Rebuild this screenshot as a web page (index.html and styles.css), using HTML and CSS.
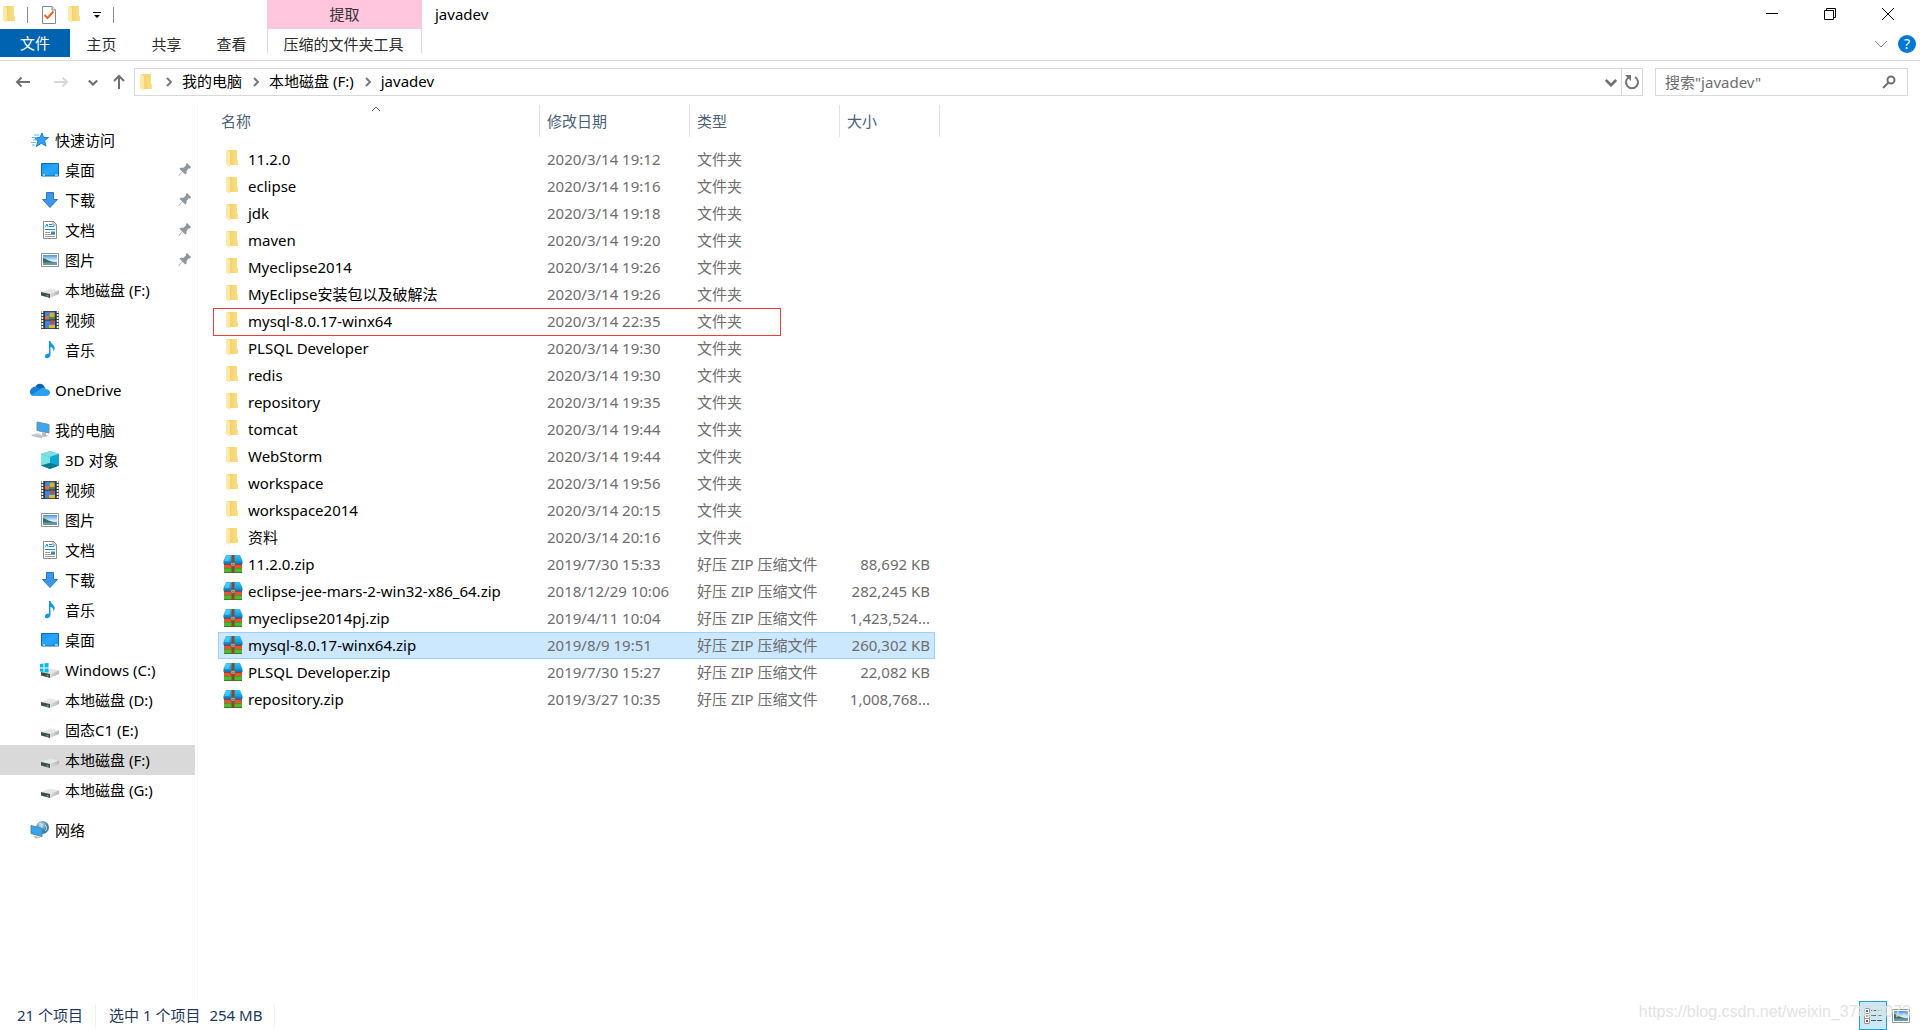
FILE: index.html
```html
<!DOCTYPE html>
<html lang="zh-CN">
<head>
<meta charset="utf-8">
<title>javadev</title>
<link rel="stylesheet" href="styles.css">
</head>
<body>
<svg class="sprite" aria-hidden="true">
  <defs>
    <linearGradient id="gold" x1="0" x2="1"><stop offset="0" stop-color="#f3cf6b"/><stop offset="1" stop-color="#fbdf83"/></linearGradient>
    <linearGradient id="sky" x1="0" y1="0" x2="0" y2="1"><stop offset="0" stop-color="#4b93dd"/><stop offset=".55" stop-color="#d9f0f8"/><stop offset="1" stop-color="#8fc0e0"/></linearGradient>
    <linearGradient id="drv" x1="0" x2="1"><stop offset="0" stop-color="#dcdcde"/><stop offset="1" stop-color="#b4b6b9"/></linearGradient>
    <linearGradient id="blue" x1="0" y1="0" x2="1" y2="1"><stop offset="0" stop-color="#1391f0"/><stop offset=".5" stop-color="#2ba6fb"/><stop offset="1" stop-color="#1395f5"/></linearGradient>
    <linearGradient id="lid" x1="0" y1="0" x2="0" y2="1"><stop offset="0" stop-color="#37c0f5"/><stop offset=".6" stop-color="#14a4e4"/><stop offset="1" stop-color="#0b6fae"/></linearGradient>
    <radialGradient id="globe" cx=".4" cy=".3"><stop offset="0" stop-color="#c4e2ee"/><stop offset="1" stop-color="#3b7f9e"/></radialGradient>
  </defs>
  <symbol id="folder" viewBox="0 0 12 17"><path d="M2 0H11V9.500L12 10.500V15H4Z" fill="url(#gold)"/><path d="M0 0H2L4 2V17L0 14.500Z" fill="#ffe9a6"/></symbol>
  <symbol id="star" viewBox="0 0 20 18"><path d="M12 2L13.500 6.500H18.500L14.500 9.800L16 15L11.300 12.300L6.300 15.500L8 10.200L4.800 7L9.800 6.500Z" fill="#2ea3f2" stroke="#1a7cc8"/><path d="M4 4H9M2 6.500H6M3 9H7M1 11.500H6M2 14H5" stroke="#66b9ee"/></symbol>
  <symbol id="desktop" viewBox="0 0 20 18"><path d="M1.500 2.500H18.500V15H1.500Z" fill="url(#blue)" stroke="#0a70b8"/><path d="M3 14H5M15 14H18" stroke="#fff"/></symbol>
  <symbol id="down" viewBox="0 0 20 18"><path d="M6.500 1.500H13.500V8.500H17.500L10 16.500L2.500 8.500H6.500Z" fill="#3b97e8" stroke="#2b78c4"/></symbol>
  <symbol id="doc" viewBox="0 0 20 18"><path d="M3.500.5H13.500L16.500 3.500V17.500H3.500Z" fill="#fff" stroke="#8b8b8b"/><path d="M13 .5V4H16.500" fill="none" stroke="#8b8b8b"/><path d="M5 6L7 3L8 6M9 3.500H12M9 5.500H14M5 8.500H15" stroke="#1b87d8" fill="none"/><path d="M5 11.500H10M5 13.500H15M5 15.500H15" stroke="#9a9a9a"/><path d="M11 10.500H15V13H11Z" fill="#3f83b5"/></symbol>
  <symbol id="pic" viewBox="0 0 20 18"><path d="M1.500 2.500H18.500V15.500H1.500Z" fill="#fff" stroke="#8f959b"/><path d="M3 4H17V14H3Z" fill="url(#sky)"/><path d="M3 7C7 8 9 11 17 11.500V12H3Z" fill="#3f6b58"/><path d="M3 11.500H17V14H3Z" fill="#6898b0"/></symbol>
  <symbol id="drive" viewBox="0 0 20 18"><path d="M1 11L10 7.500L19 9.500L10 13Z" fill="#e6e6e8"/><path d="M10 13L19 9.500V13L10 17Z" fill="url(#drv)"/><path d="M1 11L10 13V17L1 14.500Z" fill="#45494b"/><path d="M6.500 14H8.500V15.500H6.500Z" fill="#35c84a"/></symbol>
  <symbol id="windrive" viewBox="0 0 20 18"><use href="#drive" width="20" height="18"/><path d="M0 3L3.500 2.500V6.500H0ZM4.500 2.300L8.500 2V6.500H4.500ZM0 7.500H3.500V11L0 10.600ZM4.500 7.500H8.500V11.600L4.500 11.200Z" fill="#10b5ee"/></symbol>
  <symbol id="film" viewBox="0 0 20 18"><path d="M1 0H19V18H1Z" fill="#4c4c4c"/><path d="M2.500 0V18M17.500 0V18" stroke="#fff" stroke-width="2" stroke-dasharray="2 1"/><path d="M5 1H15V17H5Z" fill="#4084dc"/><path d="M4 0V18M16 0V18M4 9H16" stroke="#222"/><path d="M5 5H9V8.500H5Z" fill="#dc6e48"/><circle cx="12" cy="4" r="2.500" fill="#dcb21d"/><path d="M9 6H15V8H9Z" fill="#4a8f36"/><circle cx="12" cy="11" r="2" fill="#c04a38"/><path d="M9 14H15V17H9Z" fill="#e7b728"/></symbol>
  <symbol id="music" viewBox="0 0 20 18"><path d="M9 0H10.500C11 3 14.500 4 14.700 7C14.800 8.500 14 9.800 13 10.500C14 8 12.500 6.500 10.500 6V14C10.500 16 8.500 17.500 6.500 17.300C4.500 17 4.300 14.500 6 13.200C7 12.400 8 12.300 9 12.500Z" fill="#1198ee"/></symbol>
  <symbol id="cloud" viewBox="0 0 20 18"><path d="M5 7C6 2 13 1 15 7L10 10Z" fill="#0a63b5"/><path d="M0 11C0 7 4 5 7 6L14 12L2 14.500C1 14 0 13 0 11Z" fill="#1581d6"/><path d="M9 9C12 5.500 15.500 6.500 16.200 8.300C19 8.300 20 10 20 11.500C20 14 18 15 16 15H4C3 15 2 14.500 1.500 14Z" fill="#2aa1ec"/></symbol>
  <symbol id="pc" viewBox="0 0 20 18"><path d="M7 1L19 3.500V12L7 9.500Z" fill="#3aa7ef" stroke="#6d8da4"/><path d="M12 11L16 12V14L19 15L14 16L10 14.500L12 14Z" fill="#b4bbc2"/><path d="M0 14L9 12L14 15.500L11 17.500Z" fill="#d6dadf"/><path d="M2 14.500L12 16.500M5 13.500L13 15.500" stroke="#b1b7bc"/></symbol>
  <symbol id="cube" viewBox="0 0 20 18"><path d="M10 0L19 3V14.500L10 18L1 14.500V3Z" fill="#22b5ca"/><path d="M10 0L19 3L10 6L1 3Z" fill="#7fdee3"/><path d="M1 3L10 6V12L1 14.500Z" fill="#79e3e5"/><path d="M10 6L19 3V14.500L10 12Z" fill="#10a7d5"/><path d="M1 14.500L10 12L19 14.500L10 18Z" fill="#087b8d"/></symbol>
  <symbol id="net" viewBox="0 0 20 18"><circle cx="12.500" cy="6.500" r="6.500" fill="url(#globe)"/><path d="M9 3C12 1 13 5 11 7M15 4C17 6 17 9 15 10" stroke="#dcedf3" fill="none"/><path d="M1 4.500L12 7.500V15.500L1 12.500Z" fill="#36a5f0" stroke="#4d86ad"/><path d="M5 15L9 15.500L11 17L6 17.500L3 16Z" fill="#bfc6cb"/></symbol>
  <symbol id="pin" viewBox="0 0 14 14"><path d="M9 0L13 4L12 5.500L10.500 5.500L8.500 8V10.500L7.300 11.500L4.500 8.800L1 13L.5 12.500L4.300 8.500L1.500 5.700L2.800 4.700H5.500L8 2.500V1Z" fill="#8c979f"/></symbol>
  <symbol id="zip" viewBox="0 0 20 18"><path d="M3 0H17L19.500 6V9H.5V6Z" fill="url(#lid)"/><path d="M3 1L1.500 6H6L7 1Z" fill="#82d7f7" opacity=".5"/><path d="M1 9H19V14H1Z" fill="#e4552f"/><path d="M1 13H19V18H1Z" fill="#4dbb2c"/><path d="M1 9H19V10H1ZM1 13H19V13.500H1ZM1 17H19V18H1Z" fill="#26303a" opacity=".45"/><path d="M8.500 0H11.500V18H8.500Z" fill="#87492c"/><path d="M8 7.500H12V11H8Z" fill="#d3c9c2" stroke="#7c5f50"/><path d="M9.500 8.500H10.500V10H9.500Z" fill="#333"/></symbol>
  <symbol id="next" viewBox="0 0 8 10"><path d="M2 1L6 5L2 9" fill="none" stroke="#7a7a7a" stroke-width="2"/></symbol>
  <symbol id="chev" viewBox="0 0 14 10"><path d="M1 2L7 8L13 2" fill="none" stroke="currentColor" stroke-width="3"/></symbol>
  <symbol id="thinchev" viewBox="0 0 14 10"><path d="M1 2L7 8L13 2" fill="none" stroke="currentColor"/></symbol>
</svg>

<header>
  <div class="titlebar">
    <div class="quick">
      <svg class="folder"><use href="#folder"/></svg>
      <span class="bar"></span>
      <button aria-label="属性"><svg width="14" height="18" viewBox="0 0 14 18"><path d="M.5.5H10L13.500 4V17.500H.5Z" fill="#fff" stroke="#888"/><path d="M10 .5V4H13.500" fill="#e4e4e4" stroke="#888"/><path d="M2.500 9L5.500 12L11.500 5.500" stroke="#ef6428" stroke-width="2" fill="none"/></svg></button>
      <button aria-label="新建文件夹"><svg class="folder"><use href="#folder"/></svg></button>
      <button class="more" aria-label="自定义"><svg width="8" height="7" viewBox="0 0 8 7"><path d="M0 0H8V1H0ZM1 3H7L4 6Z"/></svg></button>
      <span class="bar"></span>
    </div>
    <div class="context">提取</div>
    <h1>javadev</h1>
    <div class="winbtns">
      <button aria-label="最小化"><svg width="12" height="12"><path d="M0 5.500H12" stroke="#000"/></svg></button>
      <button aria-label="还原"><svg width="12" height="12"><path d="M.5 2.500H9.500V11.500H.5ZM2.500 2V.5H11.500V9.500H10" stroke="#000" fill="none"/></svg></button>
      <button aria-label="关闭"><svg width="12" height="12"><path d="M0 0L12 12M12 0L0 12" stroke="#000"/></svg></button>
    </div>
  </div>
  <nav class="tabs">
    <button class="file">文件</button>
    <button>主页</button>
    <button>共享</button>
    <button>查看</button>
    <button class="tools">压缩的文件夹工具</button>
    <span class="grow"></span>
    <button class="expand" aria-label="展开功能区"><svg width="14" height="10"><use href="#thinchev"/></svg></button>
    <button class="help" aria-label="帮助">?</button>
  </nav>
</header>

<div class="address">
  <div class="moves">
    <button aria-label="后退"><svg width="16" height="12"><path d="M15 6H2M6.500 1.500L2 6L6.500 10.500" fill="none" stroke="#707070" stroke-width="2"/></svg></button>
    <button aria-label="前进"><svg width="16" height="12"><path d="M1 6H14M9.500 1.500L14 6L9.500 10.500" fill="none" stroke="#d8d8d8" stroke-width="2"/></svg></button>
    <button class="small" aria-label="最近位置"><svg width="10" height="7"><use href="#chev"/></svg></button>
    <button class="small" aria-label="向上"><svg width="12" height="16"><path d="M6 15V2M1 7L6 2L11 7" fill="none" stroke="#707070" stroke-width="2"/></svg></button>
  </div>
  <div class="path">
    <svg class="folder"><use href="#folder"/></svg>
    <svg class="next"><use href="#next"/></svg><a href="#">我的电脑</a>
    <svg class="next"><use href="#next"/></svg><a href="#">本地磁盘 (F:)</a>
    <svg class="next"><use href="#next"/></svg><a href="#">javadev</a>
    <span class="grow"></span>
    <button aria-label="历史"><svg width="12" height="9"><use href="#chev"/></svg></button>
    <button class="refresh" aria-label="刷新"><svg width="16" height="16"><path d="M5 3A6 6 0 1 0 11 3" fill="none" stroke="#747474" stroke-width="2"/><path d="M1 1H7V7Z" fill="#747474"/></svg></button>
  </div>
  <div class="search">
    <input type="search" aria-label="搜索" placeholder='搜索"javadev"'>
    <svg width="14" height="14"><circle cx="9" cy="5" r="3.500" fill="none" stroke="#707070" stroke-width="2"/><path d="M6.500 7.500L1 13" stroke="#707070" stroke-width="2"/></svg>
  </div>
</div>

<div class="body">
  <aside>
    <ul>
      <li class="top"><a href="#"><svg><use href="#star"/></svg>快速访问</a></li>
      <li><a href="#"><svg><use href="#desktop"/></svg>桌面<svg class="pin"><use href="#pin"/></svg></a></li>
      <li><a href="#"><svg><use href="#down"/></svg>下载<svg class="pin"><use href="#pin"/></svg></a></li>
      <li><a href="#"><svg><use href="#doc"/></svg>文档<svg class="pin"><use href="#pin"/></svg></a></li>
      <li><a href="#"><svg><use href="#pic"/></svg>图片<svg class="pin"><use href="#pin"/></svg></a></li>
      <li><a href="#"><svg><use href="#drive"/></svg>本地磁盘 (F:)</a></li>
      <li><a href="#"><svg><use href="#film"/></svg>视频</a></li>
      <li><a href="#"><svg><use href="#music"/></svg>音乐</a></li>
    </ul>
    <ul>
      <li class="top"><a href="#"><svg><use href="#cloud"/></svg>OneDrive</a></li>
    </ul>
    <ul>
      <li class="top"><a href="#"><svg><use href="#pc"/></svg>我的电脑</a></li>
      <li><a href="#"><svg><use href="#cube"/></svg>3D 对象</a></li>
      <li><a href="#"><svg><use href="#film"/></svg>视频</a></li>
      <li><a href="#"><svg><use href="#pic"/></svg>图片</a></li>
      <li><a href="#"><svg><use href="#doc"/></svg>文档</a></li>
      <li><a href="#"><svg><use href="#down"/></svg>下载</a></li>
      <li><a href="#"><svg><use href="#music"/></svg>音乐</a></li>
      <li><a href="#"><svg><use href="#desktop"/></svg>桌面</a></li>
      <li><a href="#"><svg><use href="#windrive"/></svg>Windows (C:)</a></li>
      <li><a href="#"><svg><use href="#drive"/></svg>本地磁盘 (D:)</a></li>
      <li><a href="#"><svg><use href="#drive"/></svg>固态C1 (E:)</a></li>
      <li class="current"><a href="#"><svg><use href="#drive"/></svg>本地磁盘 (F:)</a></li>
      <li><a href="#"><svg><use href="#drive"/></svg>本地磁盘 (G:)</a></li>
    </ul>
    <ul>
      <li class="top"><a href="#"><svg><use href="#net"/></svg>网络</a></li>
    </ul>
  </aside>
  <main>
    <table>
      <colgroup><col class="c-name"><col class="c-date"><col class="c-type"><col class="c-size"><col class="c-end"></colgroup>
      <thead>
        <tr><th>名称<svg class="sort" width="10" height="6"><path d="M1 5L5 1L9 5" fill="none" stroke="#666"/></svg></th><th>修改日期</th><th>类型</th><th colspan="2">大小</th></tr>
      </thead>
      <tbody>
        <tr><td><svg class="folder"><use href="#folder"/></svg>11.2.0</td><td>2020/3/14 19:12</td><td>文件夹</td><td></td></tr>
        <tr><td><svg class="folder"><use href="#folder"/></svg>eclipse</td><td>2020/3/14 19:16</td><td>文件夹</td><td></td></tr>
        <tr><td><svg class="folder"><use href="#folder"/></svg>jdk</td><td>2020/3/14 19:18</td><td>文件夹</td><td></td></tr>
        <tr><td><svg class="folder"><use href="#folder"/></svg>maven</td><td>2020/3/14 19:20</td><td>文件夹</td><td></td></tr>
        <tr><td><svg class="folder"><use href="#folder"/></svg>Myeclipse2014</td><td>2020/3/14 19:26</td><td>文件夹</td><td></td></tr>
        <tr><td><svg class="folder"><use href="#folder"/></svg>MyEclipse安装包以及破解法</td><td>2020/3/14 19:26</td><td>文件夹</td><td></td></tr>
        <tr class="marked"><td><svg class="folder"><use href="#folder"/></svg>mysql-8.0.17-winx64</td><td>2020/3/14 22:35</td><td>文件夹</td><td></td></tr>
        <tr><td><svg class="folder"><use href="#folder"/></svg>PLSQL Developer</td><td>2020/3/14 19:30</td><td>文件夹</td><td></td></tr>
        <tr><td><svg class="folder"><use href="#folder"/></svg>redis</td><td>2020/3/14 19:30</td><td>文件夹</td><td></td></tr>
        <tr><td><svg class="folder"><use href="#folder"/></svg>repository</td><td>2020/3/14 19:35</td><td>文件夹</td><td></td></tr>
        <tr><td><svg class="folder"><use href="#folder"/></svg>tomcat</td><td>2020/3/14 19:44</td><td>文件夹</td><td></td></tr>
        <tr><td><svg class="folder"><use href="#folder"/></svg>WebStorm</td><td>2020/3/14 19:44</td><td>文件夹</td><td></td></tr>
        <tr><td><svg class="folder"><use href="#folder"/></svg>workspace</td><td>2020/3/14 19:56</td><td>文件夹</td><td></td></tr>
        <tr><td><svg class="folder"><use href="#folder"/></svg>workspace2014</td><td>2020/3/14 20:15</td><td>文件夹</td><td></td></tr>
        <tr><td><svg class="folder"><use href="#folder"/></svg>资料</td><td>2020/3/14 20:16</td><td>文件夹</td><td></td></tr>
        <tr><td><svg class="zip"><use href="#zip"/></svg>11.2.0.zip</td><td>2019/7/30 15:33</td><td>好压 ZIP 压缩文件</td><td>88,692 KB</td></tr>
        <tr><td><svg class="zip"><use href="#zip"/></svg>eclipse-jee-mars-2-win32-x86_64.zip</td><td>2018/12/29 10:06</td><td>好压 ZIP 压缩文件</td><td>282,245 KB</td></tr>
        <tr><td><svg class="zip"><use href="#zip"/></svg>myeclipse2014pj.zip</td><td>2019/4/11 10:04</td><td>好压 ZIP 压缩文件</td><td>1,423,524...</td></tr>
        <tr class="selected"><td><svg class="zip"><use href="#zip"/></svg>mysql-8.0.17-winx64.zip</td><td>2019/8/9 19:51</td><td>好压 ZIP 压缩文件</td><td>260,302 KB</td></tr>
        <tr><td><svg class="zip"><use href="#zip"/></svg>PLSQL Developer.zip</td><td>2019/7/30 15:27</td><td>好压 ZIP 压缩文件</td><td>22,082 KB</td></tr>
        <tr><td><svg class="zip"><use href="#zip"/></svg>repository.zip</td><td>2019/3/27 10:35</td><td>好压 ZIP 压缩文件</td><td>1,008,768...</td></tr>
      </tbody>
    </table>
  </main>
</div>

<footer>
  <span class="cell">21 个项目</span>
  <span class="cell"><span>选中 1 个项目</span><span>254 MB</span></span>
  <span class="grow"></span>
  <button class="on" aria-label="详细信息"><svg width="18" height="16"><path d="M.5.5H5.500V5.500H.5ZM.5 5.500H5.500V10.500H.5ZM.5 10.500H5.500V15.500H.5Z" fill="#fff" stroke="#999"/><path d="M2 2H4V4H2Z" fill="#3c7ec4"/><path d="M2 7H4V9H2Z" fill="#b39a35"/><path d="M2 12H4V14H2Z" fill="#c33c22"/><path d="M7 2.500H12M13 2.500H18M7 7.500H12M13 7.500H18M7 12.500H12M13 12.500H18" stroke="#555"/></svg></button>
  <button aria-label="大图标"><svg width="20" height="18"><use href="#pic"/></svg></button>
  <span class="watermark">https://blog.csdn.net/weixin_37825073</span>
</footer>
</body>
</html>
```

FILE: styles.css
```css
* { box-sizing: border-box; }
body {
  margin: 0;
  min-height: 100vh;
  display: flex;
  flex-direction: column;
  background: #fff;
  color: #000;
  font: 15px/20px "Noto Sans", "Noto Sans CJK SC", sans-serif;
}
button, input { font: inherit; color: inherit; }
button {
  display: flex;
  align-items: center;
  justify-content: center;
  padding: 0;
  border: 0;
  background: none;
}
svg { flex: none; }
a { color: inherit; text-decoration: none; }
.sprite { position: absolute; width: 0; height: 0; }
.folder { width: 12px; height: 17px; }
.grow { flex: 1; }

/* title bar */
.titlebar { display: flex; height: 29px; }
.quick {
  display: flex;
  align-items: center;
  gap: 12px;
  width: 267px;
  padding-left: 3px;
}
.quick .bar { width: 1px; height: 16px; margin-right: 2px; background: #8c8c8c; }
.quick .bar:last-child { margin: 0; }
.quick .more { padding: 2px 0 0 1px; }
.context {
  width: 155px;
  background: #ffc6de;
  color: #333;
  line-height: 28px;
  text-align: center;
}
h1 { flex: 1; margin: 0 0 0 13px; font-size: 15px; font-weight: 400; line-height: 28px; }
.winbtns { display: flex; padding: 0 3px 1px 0; }
.winbtns button { width: 58px; }

/* ribbon tabs */
.tabs { display: flex; height: 32px; border-bottom: 1px solid #dadbdc; color: #2b2b2b; }
.tabs button { width: 65px; height: 29px; padding-right: 2px; }
.tabs .file { width: 70px; height: 28px; padding: 0; background: #0063b1; color: #fff; }
.tabs .tools {
  width: 155px;
  height: 24px;
  margin-left: 2px;
  padding-top: 5px;
  border: solid #dadbdc;
  border-width: 0 1px;
}
.tabs .expand { width: 14px; padding: 0; color: #8a8a8a; margin-right: 10px; }
.tabs .help {
  width: 18px;
  height: 18px;
  margin: 6px 4px 0 0;
  padding: 0;
  border-radius: 50%;
  background: #0078d7;
  color: #fff;
  font-size: 14px;
}

/* address row */
.address { display: flex; padding: 7px 12px 8px 0; height: 43px; color: #707070; }
.moves { display: flex; width: 134px; padding-left: 4px; }
.moves button { width: 38px; }
.moves .small { width: 26px; }
.path {
  flex: 1;
  display: flex;
  align-items: center;
  padding-left: 5px;
  border: 1px solid #d9d9d9;
}
.path .next { width: 8px; height: 10px; margin: 0 9px 0 10px; }
.path .folder + .next { margin-left: 13px; }
.path a { padding-bottom: 2px; color: #000; }
.path button { width: 20px; align-self: stretch; }
.path .refresh { width: 21px; border-left: 1px solid #d9d9d9; }
.search {
  display: flex;
  align-items: center;
  width: 253px;
  margin-left: 12px;
  padding: 0 11px 0 9px;
  border: 1px solid #d9d9d9;
}
.search input { flex: 1; min-width: 0; padding: 0; border: 0; outline: 0; background: none; }
.search input::placeholder { color: #6d6d6d; opacity: 1; }

/* body */
.body { flex: 1; display: flex; }
aside { width: 198px; padding-top: 21px; border-right: 1px solid #f5f5f5; }
ul { margin: 0 2px 10px 0; padding: 0; list-style: none; }
aside a { display: flex; align-items: center; gap: 5px; height: 30px; padding-left: 40px; }
aside .top a { padding-left: 30px; }
aside a svg { width: 20px; height: 18px; }
aside a .pin { width: 14px; height: 14px; margin: 0 3px 0 auto; }
.current { background: #d9d9d9; }

main { flex: 1; padding: 1px 0 0 20px; }
table { width: 722px; table-layout: fixed; border-spacing: 0; }
.c-name { width: 322px; }
.c-date, .c-type { width: 150px; }
.c-size { width: 95px; }
.c-end { width: 5px; }
th {
  position: relative;
  height: 32px;
  padding: 0 0 0 7px;
  border-right: 1px solid #e2e2e2;
  color: #4c607a;
  font-weight: 400;
  text-align: left;
}
th:first-child { padding-left: 3px; }
.sort { position: absolute; top: 1px; left: 153px; }
tbody::before { content: ""; display: block; height: 9px; }
td {
  height: 27px;
  padding: 0 0 0 6px;
  border: 1px solid transparent;
  border-width: 1px 0;
  color: #6d6d6d;
  line-height: 25px;
  white-space: nowrap;
}
td:first-child { position: relative; padding-left: 4px; border-left-width: 1px; color: #000; }
td:nth-child(2), td:nth-child(3) { padding-left: 7px; }
td:nth-child(4) { padding: 0 4px 0 0; border-right-width: 1px; text-align: right; }
td svg { width: 20px; height: 18px; margin-right: 5px; vertical-align: -3px; }
td .folder { width: 12px; height: 17px; margin: 0 10px 0 3px; vertical-align: -2px; }
.selected td { background: #cce8ff; border-color: #99d1ff; }
.marked td:first-child::after {
  content: "";
  position: absolute;
  top: -1px;
  left: -6px;
  width: 566px;
  height: 26px;
  border: 1px solid #f23c3c;
}

/* status bar */
footer {
  position: relative;
  display: flex;
  align-items: center;
  height: 29px;
  padding: 0 9px 0 4px;
  color: #1e395b;
}
.cell { display: flex; gap: 9px; padding: 0 12px 2px 13px; border-right: 1px solid #f0f0f0; }
footer button { width: 20px; height: 29px; }
footer .on { width: 28px; margin-right: 4px; border: 1px solid #26a0da; background: #cbe8f6; }
.watermark {
  position: absolute;
  right: 9px;
  top: 1px;
  color: #e0e0e0;
  opacity: .9;
  font: 16px/20px "Liberation Sans", Arial, sans-serif;
}
```
